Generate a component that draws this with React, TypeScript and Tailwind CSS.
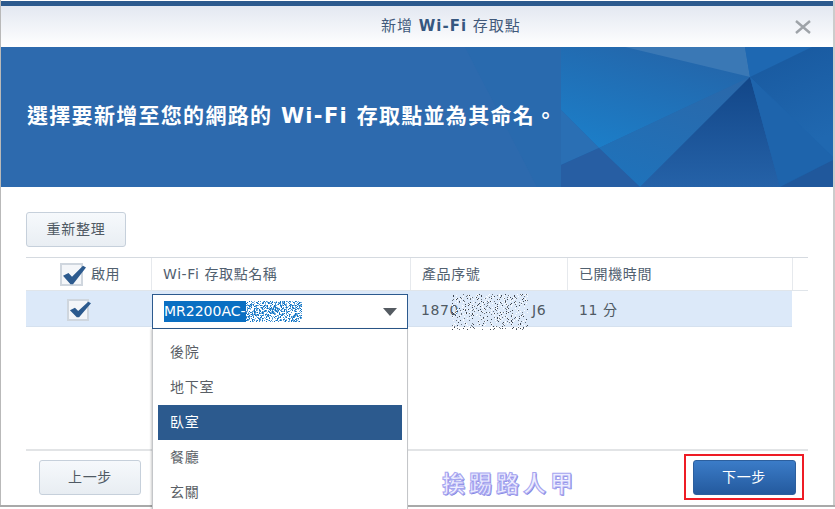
import React from "react";

function noise(w: number, h: number, seed: number, density: number) {
  const out: [number, number][] = [];
  let s = seed;
  for (let y = 0; y < h; y++) {
    for (let x = 0; x < w; x++) {
      s = (s * 1103515245 + 12345) & 0x7fffffff;
      if ((s >> 8) % 100 < density) out.push([x, y]);
    }
  }
  return out;
}

function Noise({ w, h, seed, density, colors }: { w: number; h: number; seed: number; density: number; colors: string[] }) {
  const pts = noise(w, h, seed, density);
  return (
    <svg width={w} height={h} viewBox={`0 0 ${w} ${h}`} className="block" shapeRendering="crispEdges">
      {pts.map(([x, y], i) => (
        <rect key={i} x={x} y={y} width={1} height={1} fill={colors[i % colors.length]} />
      ))}
    </svg>
  );
}

function Check({ size, tickW, tickH }: { size: number; tickW: number; tickH: number }) {
  return (
    <span className="relative block shrink-0 border-2 border-[#cfd6de] bg-[#f4f6f9]" style={{ width: size, height: size }}>
      <svg width={tickW} height={tickH} viewBox="0 0 24 24" preserveAspectRatio="none" className="absolute left-[0px] top-[0px]">
        <path d="M1 13 L6.5 9.5 L10 14 L21 1 L24 3 L11 23 L8.5 23 Z" fill="#2c5a8e" />
      </svg>
    </span>
  );
}

function BannerArt() {
  return (
    <svg viewBox="1 47 832 140" width={832} height={140} className="absolute inset-0" preserveAspectRatio="none">
      <defs>
        <linearGradient id="main" x1="0.75" y1="0" x2="0.2" y2="1">
          <stop offset="0" stopColor="#2464a8" />
          <stop offset="1" stopColor="#1c7ec8" />
        </linearGradient>
        <linearGradient id="dark" x1="0" y1="0" x2="0" y2="1">
          <stop offset="0" stopColor="#124688" />
          <stop offset="1" stopColor="#2562a8" />
        </linearGradient>
        <linearGradient id="mid" x1="0.8" y1="0" x2="0.3" y2="1">
          <stop offset="0" stopColor="#2a68aa" />
          <stop offset="1" stopColor="#1f72ba" />
        </linearGradient>
        <linearGradient id="right" x1="0" y1="0" x2="0.3" y2="1">
          <stop offset="0" stopColor="#18589e" />
          <stop offset="1" stopColor="#2068b0" />
        </linearGradient>
      </defs>
      <polygon points="465,47 561,47 561,187 537,187" fill="#296aae" />
      <polygon points="561,47 561,187 833,187 833,47" fill="#1f66ad" />
      <polygon points="561,47 625,47 750,77 599,148 561,110" fill="url(#main)" />
      <polygon points="561,110 599,148 561,165" fill="#2a6fb4" />
      <polygon points="625,47 745,47 750,77" fill="#3a78b5" />
      <polygon points="745,47 812,47 750,77" fill="#1e68b2" />
      <polygon points="812,47 833,47 833,157 750,77" fill="url(#right)" />
      <polygon points="599,148 750,77 640,187" fill="url(#mid)" />
      <polygon points="750,77 640,187 780,187" fill="url(#dark)" />
      <polygon points="750,77 833,157 833,160 780,187" fill="#1e64ac" />
      <polygon points="833,160 780,187 833,187" fill="#20589c" />
      <polygon points="561,165 599,148 640,187 561,187" fill="#275ea3" />
    </svg>
  );
}

const CJK = "font-['DejaVu_Sans','Noto_Sans_CJK_TC',sans-serif]";

export default function App() {
  return (
    <div className={`relative h-[509px] w-[835px] overflow-hidden bg-white ${CJK}`}>
      <div className="flex h-[505px] w-[835px] flex-col border-l border-r-2 border-l-[#b9b9b9] border-r-[#cccccc] pt-px">
        <div className="h-[5px] shrink-0 bg-[#2c5a8e]" />
        <div className="flex h-[41px] shrink-0 items-center bg-gradient-to-b from-[#e3e8f1] to-[#ffffff]">
          <span className="ml-[380px] text-[15px] tracking-[1px] text-[#41597a]">
            新增 <b className="font-bold text-[#36577f]">Wi-Fi</b> 存取點
          </span>
          <svg width="16" height="14" viewBox="0 0 16 14" className="ml-auto mr-[22px]">
            <path d="M1 1 L15 13 M15 1 L1 13" stroke="#9ea3a8" strokeWidth="2.4" />
          </svg>
        </div>
        <div className="relative flex h-[140px] shrink-0 items-center bg-[#2d6aae] pl-[26px]">
          <BannerArt />
          <span className="relative text-[21px] font-bold tracking-[1.3px] text-white">
            選擇要新增至您的網路的 Wi-Fi 存取點並為其命名。
          </span>
        </div>
        <div className="flex flex-1 flex-col px-[25px]">
          <button className="mt-[25px] h-[35px] w-[100px] rounded-[3px] border border-[#c6d0db] bg-gradient-to-b from-[#f6f9fc] to-[#e9eef3] text-[14px] tracking-[0.7px] text-[#505a64]">
            重新整理
          </button>
          <div className="mt-[10px] w-[782px] border-t border-[#d5dae0] text-[14px] tracking-[0.6px] text-[#51606f]">
            <div className="grid h-[33px] grid-cols-[126px_259px_157px_225px_15px] border-b border-[#e0e5ea]">
              <div className="flex items-center gap-[8px] border-r border-[#e6e9ed] pl-[34px]">
                <Check size={23} tickW={24} tickH={20} />
                <span>啟用</span>
              </div>
              <div className="flex items-center border-r border-[#e6e9ed] pl-[11px]">Wi-Fi 存取點名稱</div>
              <div className="flex items-center border-r border-[#e6e9ed] pl-[11px]">產品序號</div>
              <div className="flex items-center border-r border-[#e6e9ed] pl-[11px]">已開機時間</div>
              <div />
            </div>
            <div className="grid h-[36px] w-[766px] grid-cols-[126px_258px_157px_225px] border-b border-[#d5e1ef] bg-[#dce9f9]">
              <div className="flex items-center pl-[41px]">
                <Check size={22} tickW={22} tickH={17} />
              </div>
              <div className="pt-[3px]">
                <div className="flex h-[35px] w-[256px] items-center justify-between border border-[#2c5a8e] bg-white pl-[11px] pr-[10px]">
                  <span className="flex h-[21px] items-center bg-[#0a6fc2] text-[14px] tracking-normal text-white">
                    MR2200AC-
                    <span className="bg-white">
                      <Noise w={56} h={21} seed={17} density={52} colors={["#0a6fc2", "#3d8fd0", "#7fb6e2"]} />
                    </span>
                  </span>
                  <svg width="14" height="8" viewBox="0 0 14 8">
                    <path d="M0 0 H14 L7 8 Z" fill="#555b62" />
                  </svg>
                </div>
              </div>
              <div className="relative flex items-center pl-[11px] text-[14px] text-[#4f5963]">
                <span>1870</span>
                <span className="ml-[73px]">J6</span>
                <span className="absolute left-[42px] top-[3px]">
                  <Noise w={76} h={36} seed={91} density={20} colors={["#6a727c", "#ffffff", "#3f4650", "#ffffff"]} />
                </span>
              </div>
              <div className="flex items-center pl-[12px] text-[14px] text-[#4f5963]">11 分</div>
            </div>
          </div>
          <div className="mt-auto flex h-[56px] w-[782px] items-start justify-between border-t-2 border-[#e2e4e6] pl-[13px]">
            <button className="mt-[9px] h-[35px] w-[102px] rounded-[3px] border border-[#c6d0db] bg-gradient-to-b from-[#f6f9fc] to-[#e8edf2] text-[14px] tracking-[0.7px] text-[#505a64]">
              上一步
            </button>
            <div className="mr-[4px] mt-[3px] flex h-[46px] w-[120px] items-center justify-center border-2 border-[#ee1c25]">
              <button className="h-[35px] w-[103px] rounded-[3px] border border-[#2c5f9e] bg-gradient-to-b from-[#3b7cc8] to-[#245a9e] text-[14px] tracking-[0.7px] text-white">
                下一步
              </button>
            </div>
          </div>
        </div>
      </div>
      <div className="h-[2px] w-[835px] bg-[#a9a9a9]" />

      {/* dropdown menu */}
      <div className="absolute left-[152px] top-[329px] flex h-[190px] w-[256px] flex-col border-x border-[#c4c6c9] bg-white px-[5px] pt-[6px] text-[14px] tracking-[0.7px] text-[#5a5f66] shadow-[-1px_0_2px_rgba(0,0,0,0.2)]">
        {["後院", "地下室", "臥室", "餐廳", "玄關"].map((t, i) => (
          <div key={t} className={i === 2 ? "flex h-[35px] shrink-0 items-center bg-[#2c5a8e] pl-[12px] text-white" : "flex h-[35px] shrink-0 items-center pl-[12px]"}>
            {t}
          </div>
        ))}
      </div>

      {/* watermark */}
      <div className="absolute left-[442px] top-[469px] text-[23px] font-bold leading-[30px] tracking-[4px] text-[#eeeeff] [-webkit-text-stroke:1px_#a6a6f0] [text-shadow:1px_1px_0_#8080e0]">
        挨踢路人甲
      </div>
    </div>
  );
}
